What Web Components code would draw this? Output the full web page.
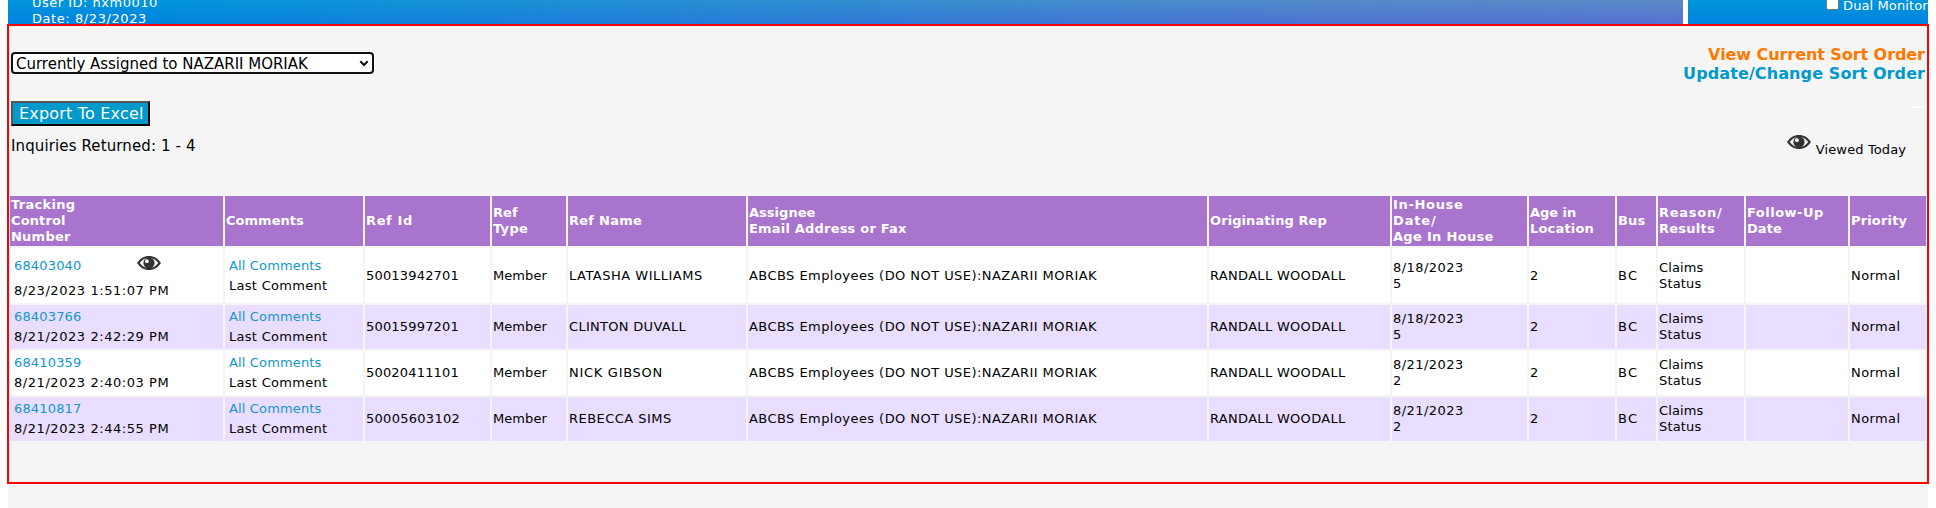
<!DOCTYPE html>
<html lang="en">
<head>
<meta charset="utf-8">
<title>Inquiries</title>
<style>
body { margin: 0; background: #fff; font: 13px/16px Verdana, "DejaVu Sans", sans-serif; color: #000; }
</style>
</head>
<body>
<inquiry-page></inquiry-page>
<script>
const ctx = document.createElement('canvas').getContext('2d');

// A single line of text tracked to an exact glyph width.
class TrackedText extends HTMLElement {
  connectedCallback() {
    const root = this.attachShadow({ mode: 'open' });
    root.innerHTML = '<style>:host{display:block;white-space:nowrap}</style><slot></slot>';
    const w = parseFloat(this.getAttribute('w'));
    const text = this.textContent;
    if (!w || text.length < 2) return;
    const cs = getComputedStyle(this);
    ctx.font = `${cs.fontWeight} ${cs.fontSize} "DejaVu Sans", sans-serif`;
    const m = ctx.measureText(text);
    const ink = m.actualBoundingBoxRight + m.actualBoundingBoxLeft;
    const ls = (w - ink) / (text.length - 1);
    this.style.letterSpacing = ls.toFixed(3) + 'px';
    this.style.marginRight = (-ls).toFixed(3) + 'px';
  }
}
customElements.define('tracked-text', TrackedText);

class EyeIcon extends HTMLElement {
  connectedCallback() {
    this.attachShadow({ mode: 'open' }).innerHTML = `
      <style>:host{display:block;width:24px;height:14px}svg{display:block}</style>
      <svg width="24" height="14" viewBox="0 0 24 14">
        <path fill="#333" fill-rule="evenodd" d="M0 7C3 2.500 7 0 12 0s9 2.500 12 7c-3 4.500-7 7-12 7S3 11.500 0 7Zm2.700 0c2.300 3.100 5.200 5 9.300 5s7-1.900 9.300-5C19 3.900 16.100 2 12 2S5 3.900 2.700 7Z"/>
        <circle cx="12" cy="7" r="5.600" fill="#333"/>
        <circle cx="9.900" cy="5.200" r="1.900" fill="#fff"/>
      </svg>`;
  }
}
customElements.define('eye-icon', EyeIcon);

class PageBanner extends HTMLElement {
  connectedCallback() {
    this.attachShadow({ mode: 'open' }).innerHTML = `
      <style>
        :host{display:flex;gap:5px;height:24px;padding:0 8px;color:#fff;background:#fff}
        .user{display:grid;width:1675px;height:24px;background:linear-gradient(#0096db,#0083df)}
        .user>*{grid-area:1/1}
        .tint{background:linear-gradient(#5a8ac6,#5670d2);
          -webkit-mask-image:linear-gradient(90deg,transparent 8%,rgba(0,0,0,.35) 35%,rgba(0,0,0,.68) 60%,rgba(0,0,0,.93) 80%,#000);
          mask-image:linear-gradient(90deg,transparent 8%,rgba(0,0,0,.35) 35%,rgba(0,0,0,.68) 60%,rgba(0,0,0,.93) 80%,#000)}
        .lines{margin:-5px 0 0 24px;height:29px}
        .opts{width:240px;box-sizing:border-box;display:flex;padding-left:138px;background:linear-gradient(#0096db,#0083df)}
        .box{box-sizing:border-box;flex:none;width:13px;height:13px;margin:-3px 4px 0 0;background:#fff;border:1px solid #767676;border-radius:2px}
        .opts tracked-text{margin-top:-2px}
      </style>
      <div class="user"><div class="tint"></div><div class="lines"><tracked-text w="124">User ID: hxm0010</tracked-text><tracked-text w="113">Date: 8/23/2023</tracked-text></div></div>
      <div class="opts"><span class="box"></span><tracked-text w="84.3">Dual Monitor</tracked-text></div>`;
  }
}
customElements.define('page-banner', PageBanner);

class InquiryToolbar extends HTMLElement {
  connectedCallback() {
    this.attachShadow({ mode: 'open' }).innerHTML = `
      <style>
        :host{display:flex;justify-content:space-between;height:170px;box-sizing:border-box;padding:26px 2px 0;font-size:16px;line-height:19px}
        .select{display:flex;align-items:center;justify-content:space-between;box-sizing:border-box;width:363px;height:22px;padding:0 3px 0 3px;
          font-size:15px;background:#fff;border:2px solid #101010;border-radius:4px;box-shadow:0 0 0 1px #fff}
        .select tracked-text{padding-top:2px}
        .button{box-sizing:border-box;width:139px;height:25px;margin-top:27px;padding:1px 6px;background:#0099cc;color:#fff;
          border:2px solid;border-color:#555 #000 #000 #555}
        .count{margin-top:11px;font-size:15px}
        .right{display:flex;flex-direction:column;align-items:flex-end;margin-top:-7px;font-weight:bold}
        .dash{width:12px;height:2px;margin:23px 0 0;background:#fff}
        .legend{display:flex;gap:5px;margin:27px 19px 0 0;font:13px/16px Verdana,"DejaVu Sans",sans-serif}
        .legend eye-icon{margin-right:-1px;padding-right:1px}
        .legend tracked-text{margin-top:7px}
      </style>
      <div>
        <div class="select"><tracked-text w="293">Currently Assigned to NAZARII MORIAK</tracked-text>
          <svg width="10" height="7" viewBox="0 0 10 7"><path d="M1.300 1.300 5 5l3.700-3.700" fill="none" stroke="#101010" stroke-width="2"/></svg></div>
        <div class="button"><tracked-text w="122">Export To Excel</tracked-text></div>
        <div class="count"><tracked-text w="183">Inquiries Returned: 1 - 4</tracked-text></div>
      </div>
      <div class="right">
        <tracked-text w="217" style="color:#ff7800">View Current Sort Order</tracked-text>
        <tracked-text w="241" style="color:#0099cc">Update/Change Sort Order</tracked-text>
        <div class="dash"></div>
        <div class="legend"><eye-icon></eye-icon><tracked-text w="90.5">Viewed Today</tracked-text></div>
      </div>`;
  }
}
customElements.define('inquiry-toolbar', InquiryToolbar);

class InquiryTable extends HTMLElement {
  connectedCallback() {
    const t = ([s, w]) => `<tracked-text w="${w}">${s}</tracked-text>`;
    const heads = [
      [['Tracking', 63.7], ['Control', 54], ['Number', 59]], [['Comments', 78]], [['Ref Id', 45]],
      [['Ref', 24], ['Type', 35]], [['Ref Name', 72]], [['Assignee', 66.5], ['Email Address or Fax', 157]],
      [['Originating Rep', 116.5]], [['In-House', 69], ['Date/', 42], ['Age In House', 100.5]],
      [['Age in', 46], ['Location', 62.5]], [['Bus', 26.5]], [['Reason/', 62], ['Results', 55]],
      [['Follow-Up', 75], ['Date', 34]], [['Priority', 55.5]]];
    const rows = [
      ['68403040', '8/23/2023 1:51:07 PM', '50013942701', ['LATASHA WILLIAMS', 132], '8/18/2023', '5'],
      ['68403766', '8/21/2023 2:42:29 PM', '50015997201', ['CLINTON DUVALL', 117.5], '8/18/2023', '5'],
      ['68410359', '8/21/2023 2:40:03 PM', '50020411101', ['NICK GIBSON', 91.5], '8/21/2023', '2'],
      ['68410817', '8/21/2023 2:44:55 PM', '50005603102', ['REBECCA SIMS', 101], '8/21/2023', '2']];
    const cell = (c, lines) => `<div class="c ${c}">${lines.map(t).join('')}</div>`;
    const body = rows.map((r, i) => {
      const k = (i % 2 ? 'alt' : '') + (i ? '' : ' first');
      return `<div class="c p track ${k}"><div class="id"><span class="link">${t([r[0], 67])}</span>${i ? '' : '<eye-icon></eye-icon>'}</div>${t([r[1], 153.5])}</div>
        <div class="c p ${k}"><span class="link">${t(['All Comments', 92.5])}</span>${t(['Last Comment', 97])}</div>` +
        [[[r[2], 91.5]], [['Member', 53.5]], [r[3]], [['ABCBS Employees (DO NOT USE):NAZARII MORIAK', 348]],
          [['RANDALL WOODALL', 135]], [[r[4], 70], [r[5], 0]], [['2', 0]], [['BC', 18]],
          [['Claims', 44.5], ['Status', 42.5]], [], [['Normal', 47.5]]].map(l => cell(k, l)).join('');
    }).join('');
    this.attachShadow({ mode: 'open' }).innerHTML = `
      <style>
        :host{display:grid;gap:2px;margin:0 1px;
          grid-template-columns:213px 138px 125px 74px 178px 459px 181px 135px 86px 39px 86px 102px 76px;
          grid-template-rows:50px 55px 44px 44px 44px}
        .c{display:flex;flex-direction:column;justify-content:center;padding:0 1px;background:#fff;min-width:0}
        .h{background:#a874ce;color:#fff;font-weight:bold}
        .alt{background:#e9deff}
        .p{padding-left:4px;line-height:20px}
        .link{display:block;color:#1296cc}
        .id{display:flex}
        .track.first{padding-top:6px}
        .first .id{height:25px}
        .id eye-icon{margin:0 0 0 56px}
      </style>
      ${heads.map(h => cell('h', h)).join('')}${body}`;
  }
}
customElements.define('inquiry-table', InquiryTable);

class InquiryPage extends HTMLElement {
  connectedCallback() {
    this.attachShadow({ mode: 'open' }).innerHTML = `
      <style>
        :host{display:block;height:508px;overflow:hidden;background:linear-gradient(90deg,#fff 8px,#f5f5f5 8px 1928px,#fff 1928px)}
        main{box-sizing:border-box;width:1922px;height:460px;margin-left:7px;border:2px solid #f00;background:#f5f5f5}
      </style>
      <page-banner></page-banner>
      <main><inquiry-toolbar></inquiry-toolbar><inquiry-table></inquiry-table></main>`;
  }
}
customElements.define('inquiry-page', InquiryPage);
</script>
</body>
</html>
